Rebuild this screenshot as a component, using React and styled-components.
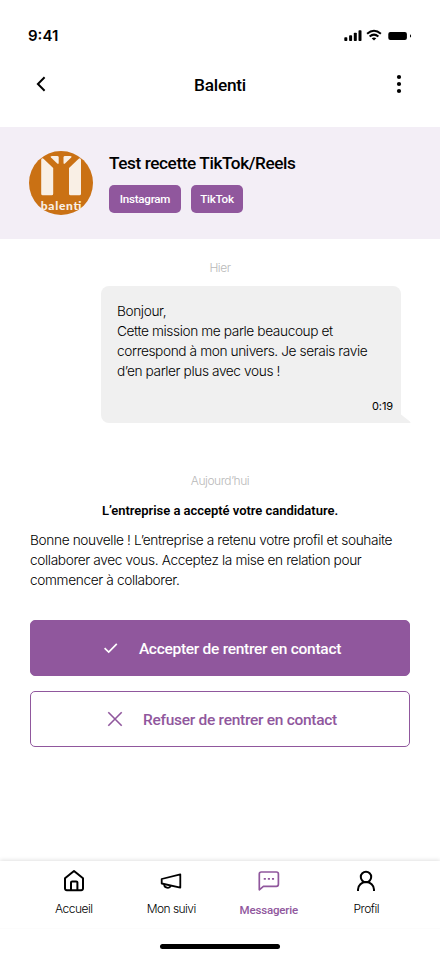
import React from "react"
import styled, { createGlobalStyle } from 'styled-components'

const tabs = [
  { label: 'Accueil', icon: 'home', spacing: -0.5 },
  { label: 'Mon suivi', icon: 'megaphone', spacing: -0.55 },
  { label: 'Messagerie', icon: 'message', active: true, spacing: -0.18 },
  { label: 'Profil', icon: 'user', spacing: -0.5 }
]

const messageLines = [
  'Bonjour,',
  'Cette mission me parle beaucoup et',
  'correspond à mon univers. Je serais ravie',
  'd’en parler plus avec vous !'
]

const noticeLines = [
  'Bonne nouvelle ! L’entreprise a retenu votre profil et souhaite',
  'collaborer avec vous. Acceptez la mise en relation pour',
  'commencer à collaborer.'
]

const TabIcon = ({ name }) => {
  switch(name){
    case 'home':
      return (
        <TabSvg viewBox="0 0 24 24">
          <path d="M3 9.2 L12 2 L21 9.2 V19.5 A1.8 1.8 0 0 1 19.2 21.3 H4.8 A1.8 1.8 0 0 1 3 19.5 Z"/>
          <path d="M9 21 V13.6 A1.2 1.2 0 0 1 10.2 12.4 H14.2 A1.2 1.2 0 0 1 15.4 13.6 V21"/>
        </TabSvg>
      )
    case 'megaphone':
      return (
        <TabSvg viewBox="0 0 24 24" $width={1.8}>
          <path d="M2.7 10 L21.3 5.4 V18.6 L2.7 14.5 Z"/>
          <path d="M5.2 15.2 A3.5 3.5 0 0 0 11.9 16.7"/>
        </TabSvg>
      )
    case 'message':
      return (
        <TabSvg viewBox="0 0 24 24" $width={1.7}>
          <path d="M2.3 20.8 V5 A2 2 0 0 1 4.3 3 H19.4 A2 2 0 0 1 21.4 5 V15.3 A2 2 0 0 1 19.4 17.3 H6.4 Z"/>
          <path d="M7.6 9.9 H8 M11.7 9.9 H12.1 M15.8 9.9 H16.2" strokeLinecap="square"/>
        </TabSvg>
      )
    default:
      return (
        <TabSvg viewBox="0 0 24 24">
          <circle cx="12" cy="8" r="5.2"/>
          <path d="M4 22 V20.5 A8 7.5 0 0 1 20 20.5 V22"/>
        </TabSvg>
      )
  }
}

const StatusIcons = () => (
  <svg width="68" height="14" viewBox="0 0 68 14">
    <rect x="0.3" y="8.3" width="3" height="3.7" rx="0.8"/>
    <rect x="5.1" y="6.3" width="3" height="5.7" rx="0.8"/>
    <rect x="9.8" y="3.8" width="3" height="8.2" rx="0.8"/>
    <rect x="14.5" y="1.3" width="3" height="10.7" rx="0.8"/>
    <g fill="none" stroke="#000" strokeWidth="2">
      <path d="M23.1 4.8 Q30 -1.3 36.9 4.8"/>
      <path d="M25.6 7.5 Q30 3.8 34.4 7.5"/>
    </g>
    <path d="M27.7 9.3 Q30 7.7 32.3 9.3 L30 11.6 Z"/>
    <rect x="44.3" y="3" width="18.6" height="8" rx="2"/>
    <path d="M66 5.2 Q67.1 5.8 67.1 6.9 Q67.1 8 66 8.6 Z"/>
  </svg>
)

const Logo = () => (
  <svg width="64" height="64" viewBox="0 0 64 64">
    <circle cx="32" cy="32" r="32" fill="#ca7114"/>
    <g fill="#f9efe5">
      <path d="M12.2 8.5 Q13 6.6 14.5 7.8 L24.2 17 V42.8 A1.5 1.5 0 0 1 22.7 44.3 H13.7 A1.5 1.5 0 0 1 12.2 42.8 Z"/>
      <path d="M52 8.5 Q51.2 6.6 49.7 7.8 L40 17 V42.8 A1.5 1.5 0 0 0 41.5 44.3 H50.5 A1.5 1.5 0 0 0 52 42.8 Z"/>
      <path d="M22 6.5 Q20.8 5 23 5 H28.2 Q29.7 5 29.7 6.4 V11.8 Q29.7 13.6 28.2 12.4 Z"/>
      <path d="M42.2 6.5 Q43.4 5 41.2 5 H36 Q34.5 5 34.5 6.4 V11.8 Q34.5 13.6 36 12.4 Z"/>
      <text x="11.8" y="59.2" fontFamily="Lato" fontWeight="900" fontSize="12" textLength="40.5">balenti</text>
    </g>
  </svg>
)

export default class Conversation extends React.Component {
  render () {
    return (
      <Screen>
        <GlobalStyle/>
        <StatusBar>
          <Time>9:41</Time>
          <StatusIcons/>
        </StatusBar>
        <Header>
          <HeaderButton aria-label="Retour">
            <svg width="24" height="24" viewBox="0 0 24 24" fill="none" stroke="#000" strokeWidth="2">
              <path d="M15.6 5.3 L8.9 12 L15.6 18.7"/>
            </svg>
          </HeaderButton>
          <Title>Balenti</Title>
          <HeaderButton aria-label="Options">
            <svg width="24" height="24" viewBox="0 0 24 24">
              <circle cx="12" cy="5" r="2.1"/>
              <circle cx="12" cy="12" r="2.1"/>
              <circle cx="12" cy="19" r="2.1"/>
            </svg>
          </HeaderButton>
        </Header>
        <Mission>
          <Logo/>
          <div>
            <MissionTitle>Test recette TikTok/Reels</MissionTitle>
            <Tags>
              <Tag $width={72}>Instagram</Tag>
              <Tag $width={52}>TikTok</Tag>
            </Tags>
          </div>
        </Mission>
        <Thread>
          <Day>Hier</Day>
          <Bubble>
            { messageLines.map((line, index) => <Line key={index}>{line}</Line>) }
            <SentAt>0:19</SentAt>
            <Tail width="10" height="10" viewBox="0 0 10 10">
              <path d="M0 1.5 L8 7.8 Q10.2 9.6 9.2 10 H0 Z"/>
            </Tail>
          </Bubble>
          <Day $top={48}>Aujourd’hui</Day>
          <Notice>L’entreprise a accepté votre candidature.</Notice>
          <NoticeText>
            { noticeLines.map((line, index) => <Line key={index} $spacing={-0.37}>{line}</Line>) }
          </NoticeText>
          <Actions>
            <Button $primary>
              <svg width="24" height="24" viewBox="0 0 24 24" fill="none" stroke="currentColor" strokeWidth="1.7">
                <path d="M5.6 12.1 L9.7 16 L17.8 7.8"/>
              </svg>
              <ButtonLabel>Accepter de rentrer en contact</ButtonLabel>
            </Button>
            <Button>
              <svg width="24" height="24" viewBox="0 0 24 24" fill="none" stroke="currentColor" strokeWidth="1.6">
                <path d="M5.3 5.3 L18.7 18.7 M18.7 5.3 L5.3 18.7"/>
              </svg>
              <ButtonLabel>Refuser de rentrer en contact</ButtonLabel>
            </Button>
          </Actions>
        </Thread>
        <TabBar>
          {
            tabs.map((tab) => {
              return (
                <Tab key={tab.label} $active={tab.active}>
                  <TabIcon name={tab.icon}/>
                  <TabLabel $active={tab.active} $spacing={tab.spacing}>{tab.label}</TabLabel>
                </Tab>
              )
            })
          }
        </TabBar>
        <HomeArea><HomeIndicator/></HomeArea>
      </Screen>
    )
  }
}

const GlobalStyle = createGlobalStyle`
  * { box-sizing: border-box; }
  body {
    margin: 0;
    background: white;
  }
  svg {
    display: block;
    flex-shrink: 0;
  }
`

const Screen = styled.div`
  display: flex;
  flex-direction: column;
  width: 440px;
  height: 956px;
  overflow: hidden;
  background: white;
  color: black;
  font-family: Inter, "Liberation Sans", sans-serif;
  font-weight: 300;
`

const StatusBar = styled.div`
  display: flex;
  align-items: center;
  justify-content: space-between;
  height: 54px;
  padding: 17px 28px 0 28px;
`

const Time = styled.span`
  font-size: 15px;
  font-weight: 600;
`

const Header = styled.header`
  display: flex;
  align-items: center;
  justify-content: space-between;
  height: 73px;
  padding: 0 29px 13px;
`

const HeaderButton = styled.button`
  padding: 0;
  border: none;
  background: none;
`

const Title = styled.h1`
  margin: 0;
  padding-top: 1px;
  font-family: Roboto, sans-serif;
  font-size: 17.3px;
  font-weight: 500;
  letter-spacing: -0.25px;
`

const Mission = styled.section`
  display: flex;
  gap: 16px;
  height: 112px;
  padding: 24px 29px;
  background: #f3eef6;
`

const MissionTitle = styled.h2`
  margin: 1px 0 10px;
  font-family: Roboto, sans-serif;
  font-size: 17.2px;
  font-weight: 500;
  line-height: 23px;
  letter-spacing: -0.4px;
  white-space: nowrap;
`

const Tags = styled.div`
  display: flex;
  gap: 10px;
`

const Tag = styled.span`
  width: ${({ $width }) => $width}px;
  height: 28px;
  border-radius: 5px;
  background: #90579d;
  color: white;
  font-family: Roboto, sans-serif;
  font-size: 11.6px;
  font-weight: 500;
  line-height: 28px;
  letter-spacing: -0.25px;
  text-align: center;
`

const Thread = styled.main`
  flex: 1;
  display: flex;
  flex-direction: column;
  padding: 19px 30px 0;
`

const Day = styled.div`
  margin-top: ${({ $top }) => $top || 0}px;
  color: #b9b9b9;
  font-size: 12px;
  line-height: 20px;
  letter-spacing: -0.45px;
  text-align: center;
`

const Bubble = styled.div`
  position: relative;
  display: flex;
  flex-direction: column;
  width: 300px;
  height: 137.5px;
  margin: 7.5px 9px 0 auto;
  padding: 15.5px 8px 8px 16px;
  border-radius: 8px 8px 0 8px;
  background: #f0f0f0;
`

const Line = styled.div`
  font-size: 13.7px;
  line-height: 20px;
  letter-spacing: ${({ $spacing }) => $spacing || -0.4}px;
  white-space: nowrap;
`

const SentAt = styled.time`
  margin-top: auto;
  align-self: flex-end;
  font-size: 11px;
  font-weight: 400;
  line-height: 18px;
  letter-spacing: -0.1px;
`

const Tail = styled.svg`
  position: absolute;
  right: -10px;
  bottom: 0;
  fill: #f0f0f0;
`

const Notice = styled.strong`
  margin-top: 10px;
  font-family: Roboto, sans-serif;
  font-size: 13px;
  font-weight: 600;
  line-height: 20px;
  letter-spacing: -0.03px;
  text-align: center;
`

const NoticeText = styled.div`
  margin-top: 9px;
`

const Actions = styled.div`
  display: flex;
  flex-direction: column;
  gap: 15px;
  margin-top: 30.4px;
`

const Button = styled.button`
  display: flex;
  align-items: center;
  justify-content: center;
  gap: 16px;
  height: 56px;
  padding: 0;
  border: 1px solid #90579d;
  border-radius: 5px;
  background: ${({ $primary }) => $primary ? '#90579d' : 'white'};
  color: ${({ $primary }) => $primary ? 'white' : '#90579d'};
`

const ButtonLabel = styled.span`
  padding-top: 1px;
  font-family: Roboto, sans-serif;
  font-size: 15.5px;
  font-weight: 500;
  letter-spacing: -0.28px;
`

const TabBar = styled.nav`
  display: flex;
  height: 68px;
  padding: 8px 25px 0;
  border-bottom: 1px solid #fcfcfc;
  box-shadow: 0 -1px 4px rgba(0, 0, 0, 0.12);
`

const Tab = styled.div`
  flex: 1;
  display: flex;
  flex-direction: column;
  align-items: center;
  gap: 6px;
  color: ${({ $active }) => $active ? '#90579d' : 'black'};
`

const TabSvg = styled.svg`
  width: 24px;
  height: 24px;
  fill: none;
  stroke: currentColor;
  stroke-width: ${({ $width }) => $width || 2};
  stroke-linejoin: round;
`

const TabLabel = styled.span`
  padding-top: ${({ $active }) => $active ? 1 : 0}px;
  font-family: ${({ $active }) => $active ? 'Roboto' : 'Inter'}, sans-serif;
  font-size: ${({ $active }) => $active ? 11.5 : 12}px;
  font-weight: ${({ $active }) => $active ? 500 : 300};
  line-height: 20px;
  letter-spacing: ${({ $spacing }) => $spacing}px;
`

const HomeArea = styled.div`
  display: flex;
  justify-content: center;
  height: 27px;
  padding-top: 15px;
  background: white;
`

const HomeIndicator = styled.div`
  width: 120px;
  height: 5px;
  border-radius: 3px;
  background: black;
`
